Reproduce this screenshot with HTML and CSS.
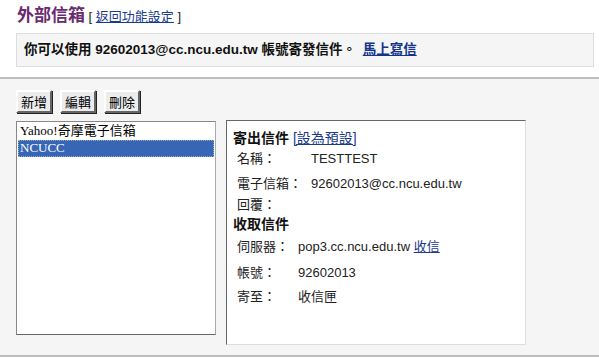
FILE: index.html
```html
<!DOCTYPE html>
<html>
<head>
    <meta charset="utf-8" />
    <title>外部信箱</title>
    <link rel="stylesheet" href="styles.css">
</head>
<body>
    <div class="top">
        <div class="head"><span class="title">外部信箱</span> [ <a href="#">返回功能設定</a> ]</div>
        <div class="notice">你可以使用 92602013@cc.ncu.edu.tw 帳號寄發信件。 <a href="#">馬上寫信</a></div>
    </div>
    <div class="work">
        <div class="tools">
            <button class="btn">新增</button>
            <button class="btn">編輯</button>
            <button class="btn">刪除</button>
        </div>
        <div class="panes">
            <div class="list">
                <div class="opt">Yahoo!奇摩電子信箱</div>
                <div class="opt selected">NCUCC</div>
            </div>
            <div class="detail">
                <div class="sect">寄出信件 <a href="#">[設為預設]</a></div>
                <div class="rows send">
                    <span>名稱：</span><span>TESTTEST</span>
                    <span>電子信箱：</span><span>92602013@cc.ncu.edu.tw</span>
                    <span>回覆：</span><span></span>
                </div>
                <div class="sect">收取信件</div>
                <div class="rows recv">
                    <span>伺服器：</span><span>pop3.cc.ncu.edu.tw <a href="#">收信</a></span>
                    <span>帳號：</span><span>92602013</span>
                    <span>寄至：</span><span>收信匣</span>
                </div>
            </div>
        </div>
    </div>
</body>
</html>
```

FILE: styles.css
```css
* { box-sizing: border-box; }
body { margin: 0; width: 599px; height: 360px; font-family: "Liberation Sans", "Noto Sans CJK TC", sans-serif; font-size: 12px; color: #222; background: #fff; overflow: hidden; }
a { color: #1a3a8c; }
.top { padding: 5px 5px 10px 16px; }
.head { font-size: 13px; height: 23px; line-height: 22px; padding-left: 1px; }
    .head .title { font-size: 17px; font-weight: bold; color: #6a2a6e; }
.notice { margin-top: 5px; height: 34px; line-height: 32px; border: 1px solid #ddd; background: #f5f5f5; padding-left: 7px; font-size: 13.5px; font-weight: bold; color: #111; }
    .notice a { margin-left: 3px; color: #12348a; }
.work { border-top: 2px solid #bdbdbd; border-bottom: 2px solid #bdbdbd; background: #f5f5f5; height: 280px; padding: 11px 0 0 16px; }
.tools { display: flex; gap: 8px; height: 31px; }
.btn { height: 23px; width: 36px; padding: 0; font-family: "Noto Sans CJK TC", sans-serif; font-size: 13px; line-height: 19px; color: #000; background: #ececec; border: 2px solid; border-color: #fff #666 #666 #fff; box-shadow: 1px 1px 0 #222; }
.panes { display: flex; align-items: flex-start; gap: 10px; }
.list { width: 200px; height: 214px; background: #fff; border: 1px solid; border-color: #888 #aaa #666 #888; padding: 1px; font-family: "Liberation Serif", "Noto Sans CJK TC", serif; font-size: 13px; }
    .list .opt { height: 17px; line-height: 16px; padding-left: 2px; color: #000; }
    .list .opt.selected { background: #3766b7; color: #fff; outline: 1px dotted #9ab; outline-offset: -1px; }
.detail { width: 300px; height: 225px; margin-top: -1px; background: #fff; border: 1px solid; border-color: #666 #ddd #ddd #666; padding: 7px 6px; color: #222; }
.sect { font-size: 14px; font-weight: bold; color: #111; height: 20px; line-height: 20px; }
    .sect a { font-weight: normal; }
.rows { display: grid; padding-left: 4px; font-size: 13px; }
    .rows span { height: 24px; line-height: 22px; font-family: "Liberation Sans", "Noto Sans CJK TC", sans-serif; }
.send { grid-template-columns: 74px 1fr; }
    .send span:nth-child(1), .send span:nth-child(2) { height: 25px; }
    .send span:nth-child(3), .send span:nth-child(4) { height: 21px; }
    .send span:nth-child(5), .send span:nth-child(6) { height: 20px; }
.recv { grid-template-columns: 61px 1fr; padding-top: 2px; }
    .recv span:nth-child(1), .recv span:nth-child(2) { height: 26px; }
```
